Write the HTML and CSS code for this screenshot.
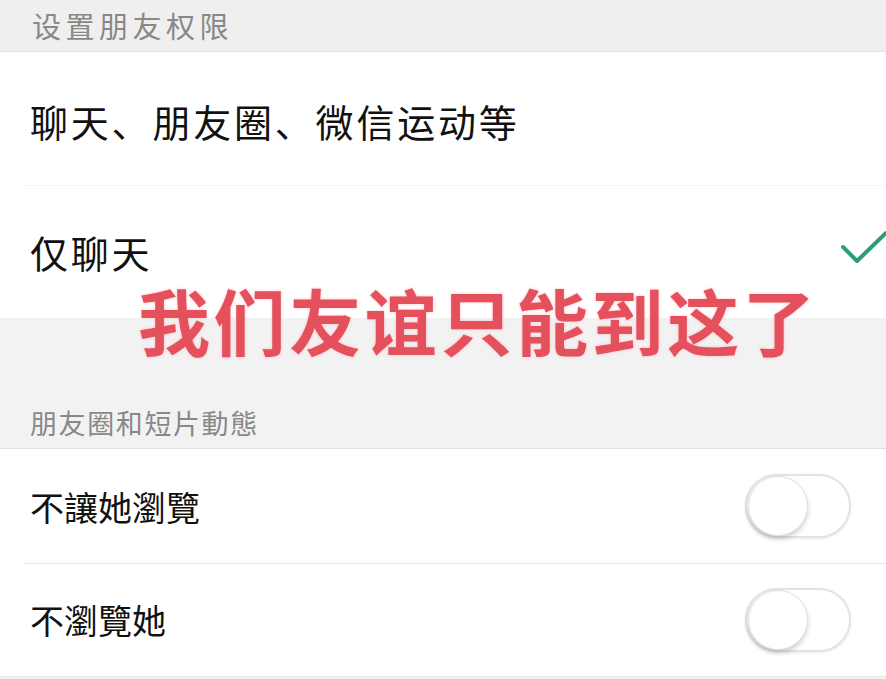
FILE: index.html
```html
<!DOCTYPE html>
<html lang="zh">
<head>
<meta charset="utf-8">
<link rel="stylesheet" href="styles.css">
</head>
<body>
<div class="page">
  <div class="section-head top">设置朋友权限</div>
  <div class="group">
    <div class="row tall first">聊天、朋友圈、微信运动等</div>
    <div class="row tall">
      <span>仅聊天</span>
      <svg class="check" width="46" height="36" viewBox="0 0 46 36">
        <path d="M3 17 L17 31 L46 3" fill="none" stroke="#2e9e72" stroke-width="4" stroke-linecap="round" stroke-linejoin="round"/>
      </svg>
    </div>
  </div>
  <div class="section-head gap">朋友圈和短片動態</div>
  <div class="group">
    <div class="row switch-row first">
      <span>不讓她瀏覽</span>
      <span class="switch"><span class="knob"></span></span>
    </div>
    <div class="row switch-row">
      <span>不瀏覽她</span>
      <span class="switch"><span class="knob"></span></span>
    </div>
  </div>
  <div class="caption">我们友谊只能到这了</div>
</div>
</body>
</html>
```

FILE: styles.css
```css
html, body {
  margin: 0;
  padding: 0;
  background: #f2f2f2;
}
body {
  font-family: "Noto Sans CJK SC", "Noto Sans", sans-serif;
  width: 886px;
  height: 679px;
  overflow: hidden;
}
.page {
  position: relative;
  width: 886px;
  height: 679px;
  background: #f2f2f2;
}
.section-head {
  color: #888;
  font-size: 29px;
  letter-spacing: 4.5px;
  padding-left: 32px;
  box-sizing: border-box;
  display: flex;
  align-items: flex-end;
}
.section-head.top {
  height: 52px;
  align-items: center;
  background: #efefef;
  border-bottom: 1px solid #e4e4e4;
  padding-bottom: 2px;
}
.section-head.gap {
  height: 131px;
  font-size: 27px;
  letter-spacing: 1.6px;
  padding-left: 30px;
  padding-bottom: 6px;
  border-bottom: 1px solid #e2e2e2;
}
.group {
  background: #fff;
}
.row {
  display: flex;
  align-items: center;
  justify-content: space-between;
  color: #111;
  padding-left: 30px;
  box-sizing: border-box;
  position: relative;
}
.row + .row::before {
  content: "";
  position: absolute;
  left: 24px;
  right: 0;
  top: 0;
  height: 1px;
  background: #e6e6e6;
}
.row.tall {
  height: 133px;
  font-size: 38px;
  letter-spacing: 2.8px;
}
.row.tall.first {
  padding-top: 4px;
}
.row.tall + .row.tall::before {
  background: #f6f6f6;
}
.check {
  display: block;
  margin-right: 0;
  margin-top: -8px;
}
.row.switch-row {
  height: 114px;
  font-size: 34px;
  padding-right: 35px;
  border-bottom: 1px solid #e6e6e6;
}
.row.switch-row.first {
  border-bottom: none;
}
.switch {
  position: relative;
  width: 106px;
  height: 64px;
  box-sizing: border-box;
  border: 2px solid #e3e3e3;
  border-radius: 32px;
  background: #fff;
  box-shadow: 0 1px 3px rgba(0,0,0,0.08);
}
.knob {
  position: absolute;
  left: 1px;
  top: 0px;
  width: 60px;
  height: 60px;
  box-sizing: border-box;
  border-radius: 50%;
  background: #fff;
  border: 1px solid #e0e0e0;
  box-shadow: 0 3px 5px rgba(0,0,0,0.18);
}
.caption {
  position: absolute;
  left: 138px;
  top: 276px;
  font-size: 72px;
  font-weight: 700;
  letter-spacing: 3.6px;
  color: #e5505d;
  line-height: 1.2;
  white-space: nowrap;
  text-shadow: 0 0 3px rgba(255,170,180,0.8);
}
```
